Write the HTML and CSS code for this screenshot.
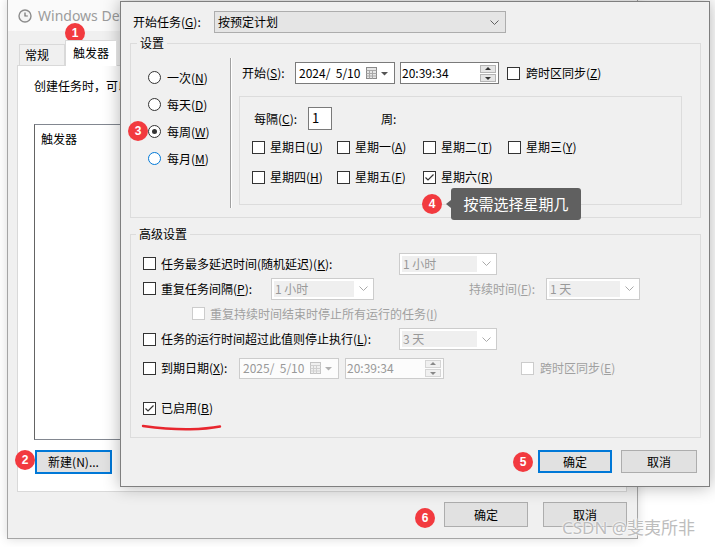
FILE: index.html
```html
<!DOCTYPE html>
<html lang="zh-CN">
<head>
    <meta charset="UTF-8">
    <title>触发器</title>
    <link rel="stylesheet" href="styles.css">
</head>
<body>
<div class="desk">

    <!-- 后面的属性窗口 -->
    <div class="win back">
        <div class="titlebar">
            <svg class="clock" width="14" height="14" viewBox="0 0 14 14">
                <circle cx="7" cy="7" r="6" fill="#f4f4f4" stroke="#8c8c8c" stroke-width="1.4"/>
                <path d="M7 3.5V7H9.8" fill="none" stroke="#707070" stroke-width="1.2"/>
            </svg>
            <span class="title">Windows Defe</span>
        </div>
        <div class="tabs">
            <span class="tab">常规</span><span class="tab active">触发器</span>
        </div>
        <div class="panel">
            <p class="hint">创建任务时，可以指定触发任务的条件。</p>
            <div class="listbox"><div class="lb-head">触发器</div></div>
            <button class="btn focus new">新建(N)...</button>
        </div>
        <div class="foot">
            <button class="btn big">确定</button>
            <button class="btn big">取消</button>
        </div>
    </div>

    <!-- 新建触发器对话框 -->
    <div class="win front">
        <div class="task-row">
            <span class="task-lbl">开始任务(<u>G</u>):</span>
            <div class="combo main">
                <span>按预定计划</span>
                <svg width="9" height="5" viewBox="0 0 9 5"><polyline points="0.5,0.5 4.5,4.5 8.5,0.5" fill="none" stroke="#606060"/></svg>
            </div>
        </div>

        <div class="group">
            <div class="group-title">设置</div>
            <div class="settings">
                <div class="freq">
                    <div class="radio-row"><span class="radio"></span><span>一次(<u>N</u>)</span></div>
                    <div class="radio-row"><span class="radio"></span><span>每天(<u>D</u>)</span></div>
                    <div class="radio-row"><span class="radio on"></span><span>每周(<u>W</u>)</span></div>
                    <div class="radio-row"><span class="radio hover"></span><span>每月(<u>M</u>)</span></div>
                </div>
                <div class="sep"></div>
                <div class="sched">
                    <div class="start-row">
                        <span class="start-lbl">开始(<u>S</u>):</span>
                        <div class="field date">
                            <span>2024/&nbsp;&nbsp;5/10</span>
                            <svg width="26" height="12" viewBox="0 0 26 12">
                                <rect x="0.5" y="0.5" width="10" height="11" fill="#e6e6e6" stroke="#8a8a8a"/>
                                <path d="M0.5 3.5H10.5M3.5 3.5V11.5M6.5 3.5V11.5M0.5 6.5H10.5M0.5 9H10.5" stroke="#a8a8a8" fill="none"/>
                                <path d="M15 5H22L18.5 8.5Z" fill="#555"/>
                            </svg>
                        </div>
                        <div class="field time">
                            <span>20:39:34</span>
                            <span class="spin"><i class="up"></i><i class="down"></i></span>
                        </div>
                        <span class="cb"></span>
                        <span class="cb-text">跨时区同步(<u>Z</u>)</span>
                    </div>
                    <div class="weekbox">
                        <div class="every">
                            <span class="every-lbl">每隔(<u>C</u>):</span>
                            <span class="num">1</span>
                            <span class="week">周:</span>
                        </div>
                        <div class="days">
                            <label class="day"><span class="cb"></span><span>星期日(<u>U</u>)</span></label>
                            <label class="day"><span class="cb"></span><span>星期一(<u>A</u>)</span></label>
                            <label class="day"><span class="cb"></span><span>星期二(<u>T</u>)</span></label>
                            <label class="day"><span class="cb"></span><span>星期三(<u>Y</u>)</span></label>
                            <label class="day"><span class="cb"></span><span>星期四(<u>H</u>)</span></label>
                            <label class="day"><span class="cb"></span><span>星期五(<u>F</u>)</span></label>
                            <label class="day"><span class="cb on"><svg width="11" height="11" viewBox="0 0 11 11"><polyline points="1.5,5.5 4,8 9.5,2.5" fill="none" stroke="#333" stroke-width="1.2"/></svg></span><span>星期六(<u>R</u>)</span></label>
                        </div>
                    </div>
                </div>
            </div>
        </div>

        <div class="group adv-group">
            <div class="group-title">高级设置</div>
            <div class="adv">
                <div class="row r1">
                    <span class="cb"></span>
                    <span class="lbl w233">任务最多延迟时间(随机延迟)(<u>K</u>):</span>
                    <div class="combo off w98"><span class="val">1 小时</span><svg width="9" height="5" viewBox="0 0 9 5"><polyline points="0.5,0.5 4.5,4.5 8.5,0.5" fill="none" stroke="#aaa"/></svg></div>
                </div>
                <div class="row r2">
                    <span class="cb"></span>
                    <span class="lbl w105">重复任务间隔(<u>P</u>):</span>
                    <div class="combo off w103"><span class="val">1 小时</span><svg width="9" height="5" viewBox="0 0 9 5"><polyline points="0.5,0.5 4.5,4.5 8.5,0.5" fill="none" stroke="#aaa"/></svg></div>
                    <span class="lbl dim dur">持续时间(<u>F</u>):</span>
                    <div class="combo off w94"><span class="val">1 天</span><svg width="9" height="5" viewBox="0 0 9 5"><polyline points="0.5,0.5 4.5,4.5 8.5,0.5" fill="none" stroke="#aaa"/></svg></div>
                </div>
                <div class="row r3">
                    <span class="cb off"></span>
                    <span class="dim">重复持续时间结束时停止所有运行的任务(<u>I</u>)</span>
                </div>
                <div class="row r4">
                    <span class="cb"></span>
                    <span class="lbl w233">任务的运行时间超过此值则停止执行(<u>L</u>):</span>
                    <div class="combo off w98"><span class="val">3 天</span><svg width="9" height="5" viewBox="0 0 9 5"><polyline points="0.5,0.5 4.5,4.5 8.5,0.5" fill="none" stroke="#aaa"/></svg></div>
                </div>
                <div class="row r5">
                    <span class="cb"></span>
                    <span class="lbl w73">到期日期(<u>X</u>):</span>
                    <div class="field date off">
                        <span>2025/&nbsp;&nbsp;5/10</span>
                        <svg width="26" height="12" viewBox="0 0 26 12">
                            <rect x="0.5" y="0.5" width="10" height="11" fill="#f0f0f0" stroke="#c4c4c4"/>
                            <path d="M0.5 3.5H10.5M3.5 3.5V11.5M6.5 3.5V11.5M0.5 6.5H10.5M0.5 9H10.5" stroke="#d0d0d0" fill="none"/>
                            <path d="M15 5H22L18.5 8.5Z" fill="#b0b0b0"/>
                        </svg>
                    </div>
                    <div class="field time off">
                        <span>20:39:34</span>
                        <span class="spin"><i class="up"></i><i class="down"></i></span>
                    </div>
                    <span class="cb off tz"></span>
                    <span class="dim tz-text">跨时区同步(<u>E</u>)</span>
                </div>
                <div class="row r6">
                    <span class="cb on"><svg width="11" height="11" viewBox="0 0 11 11"><polyline points="1.5,5.5 4,8 9.5,2.5" fill="none" stroke="#333" stroke-width="1.2"/></svg></span>
                    <span class="lbl">已启用(<u>B</u>)</span>
                </div>
            </div>
        </div>

        <div class="front-foot">
            <button class="btn focus ok">确定</button>
            <button class="btn cancel">取消</button>
        </div>
    </div>

    <!-- 标注 -->
    <span class="badge b1">1</span>
    <span class="badge b2">2</span>
    <span class="badge b3">3</span>
    <span class="badge b4">4</span>
    <span class="badge b5">5</span>
    <span class="badge b6">6</span>

    <div class="tip">按需选择星期几</div>

    <svg class="scribble" width="86" height="12" viewBox="0 0 86 12">
        <path d="M3 5C18 7 34 8.5 50 8.2S72 7 80 5.5" fill="none" stroke="#e8262e" stroke-width="2.4" stroke-linecap="round"/>
    </svg>

    <div class="mark">CSDN @斐夷所非</div>
</div>
</body>
</html>
```

FILE: styles.css
```css
* {
    margin: 0;
    padding: 0;
    box-sizing: border-box;
}

body {
    width: 715px;
    height: 547px;
    overflow: hidden;
    background: #fff;
    font: 12px/16px "Noto Sans CJK SC", "Noto Sans", sans-serif;
    color: #000;
}

u {
    text-decoration: underline;
    text-underline-offset: 1px;
}

.desk {
    position: relative;
    width: 715px;
    height: 547px;
}

/* 窗口 */
.win {
    position: absolute;
    background: #f0f0f0;
}

.back {
    left: 7px;
    top: -1px;
    width: 631px;
    height: 540px;
    border: 1px solid #a5a5a5;
    box-shadow: 0 0 10px rgba(0, 0, 0, .15);
}

.titlebar {
    display: flex;
    align-items: center;
    gap: 6px;
    height: 31px;
    padding-left: 10px;
    background: #fafafa;
    color: #9c9c9c;
    font: 14px/20px "Noto Sans", sans-serif;
}

.title {
    white-space: nowrap;
}

.tabs {
    display: flex;
    align-items: flex-end;
    height: 25px;
    margin: 9px 0 0 11px;
}

.tab {
    height: 21px;
    width: 46px;
    padding: 2px 0 0 5px;
    border: 1px solid #d9d9d9;
    border-bottom: none;
    background: #f0f0f0;
}

.tab.active {
    position: relative;
    z-index: 1;
    width: 52px;
    height: 26px;
    margin-bottom: -1px;
    padding: 4px 0 0 7px;
    background: #fff;
}

.panel {
    width: 610px;
    height: 427px;
    margin-left: 9px;
    padding: 12px 0 0 16px;
    background: #fff;
    border: 1px solid #d9d9d9;
}

.hint {
    white-space: nowrap;
}

.listbox {
    width: 580px;
    height: 316px;
    margin-top: 30px;
    border: 1px solid #828790;
    border-left-color: #646464;
}

.lb-head {
    padding: 6px;
}

.btn {
    display: flex;
    align-items: center;
    justify-content: center;
    background: #e1e1e1;
    border: 1px solid #adadad;
    font: inherit;
    color: #000;
}

.btn.focus {
    border: 2px solid #0078d7;
}

.new {
    width: 77px;
    height: 24px;
    margin: 10px 0 0 1px;
}

.foot {
    display: flex;
    justify-content: flex-end;
    gap: 15px;
    padding-right: 10px;
    margin-top: 10px;
}

.big {
    width: 84px;
    height: 25px;
}

/* 前面的对话框 */
.front {
    left: 120px;
    top: 1px;
    width: 590px;
    height: 486px;
    border: 1px solid #7f7f7f;
    box-shadow: 0 0 16px rgba(0, 0, 0, .3);
}

.task-row {
    display: flex;
    align-items: center;
    height: 22px;
    margin: 9px 0 0 12px;
}

.task-lbl {
    width: 81px;
}

.combo {
    display: flex;
    align-items: center;
    justify-content: space-between;
    height: 22px;
}

.combo.main {
    width: 292px;
    padding: 0 6px 0 3px;
    background: #e5e5e5;
    border: 1px solid #adadad;
}

.combo.off {
    padding: 2px 0 2px 2px;
    background: #fff;
    border: 1px solid #ccc;
    color: #999;
}

.combo.off .val {
    flex: 1;
    height: 100%;
    padding-left: 1px;
    line-height: 16px;
    background: #efefef;
}

.combo.off svg {
    margin: 0 5px;
}

.w98 { width: 98px; }
.w103 { width: 103px; }
.w94 { width: 94px; }

/* 分组框 */
.group {
    width: 571px;
    margin: 10px 0 0 9px;
    border: 1px solid #dcdcdc;
}

.group-title {
    width: fit-content;
    margin: -9px 0 0 6px;
    padding: 0 3px;
    line-height: 16px;
    background: #f0f0f0;
}

.adv-group {
    margin-top: 16px;
}

.adv-group .group-title {
    margin-left: 5px;
}

.settings {
    display: flex;
    height: 166px;
}

.freq {
    width: 99px;
    padding: 13px 0 0 17px;
}

.radio-row {
    display: flex;
    align-items: center;
    gap: 6px;
    height: 27px;
}

.radio {
    position: relative;
    width: 13px;
    height: 13px;
    border: 1px solid #333;
    border-radius: 50%;
    background: #fff;
}

.radio.on::after {
    content: "";
    position: absolute;
    left: 3px;
    top: 3px;
    width: 5px;
    height: 5px;
    border-radius: 50%;
    background: #333;
}

.radio.hover {
    border-color: #0078d7;
}

.sep {
    width: 2px;
    height: 150px;
    margin-top: 7px;
    border-left: 1px solid #a0a0a0;
    border-right: 1px solid #fff;
}

.sched {
    padding: 11px 0 0 10px;
}

.start-row {
    display: flex;
    align-items: center;
    height: 22px;
}

.start-lbl {
    width: 53px;
}

.field {
    display: flex;
    align-items: center;
    justify-content: space-between;
    height: 22px;
    padding: 0 2px 0 3px;
    background: #fff;
    border: 1px solid #7a7a7a;
}

.field.date {
    width: 100px;
}

.field.time {
    width: 99px;
    margin-left: 5px;
    padding-left: 1px;
}

.field.off {
    height: 21px;
    border-color: #ccc;
    color: #999;
    background: #fcfcfc;
}

.spin {
    display: flex;
    flex-direction: column;
    gap: 1px;
}

.spin i {
    position: relative;
    width: 16px;
    height: 8px;
    background: #e5e5e5;
    border: 1px solid #b4b4b4;
}

.spin i::after {
    content: "";
    position: absolute;
    left: 4px;
    border-left: 3px solid transparent;
    border-right: 3px solid transparent;
}

.spin .up::after {
    top: 1px;
    border-bottom: 3px solid #333;
}

.spin .down::after {
    top: 2px;
    border-top: 3px solid #333;
}

.field.off .spin i {
    background: #f0f0f0;
    border-color: #d5d5d5;
}

.field.off .spin .up::after { border-bottom-color: #888; }
.field.off .spin .down::after { border-top-color: #888; }

.cb {
    display: inline-flex;
    align-items: center;
    justify-content: center;
    flex: 0 0 auto;
    width: 13px;
    height: 13px;
    background: #fff;
    border: 1px solid #333;
}

.cb.off {
    border-color: #ccc;
}

.start-row .cb {
    margin-left: 8px;
}

.cb-text {
    margin-left: 6px;
}

.weekbox {
    width: 443px;
    height: 109px;
    margin: 12px 0 0 -3px;
    padding: 10px 0 0 12px;
    border: 1px solid #dcdcdc;
}

.every {
    display: flex;
    align-items: center;
    height: 23px;
    margin-left: 2px;
}

.every-lbl {
    width: 54px;
}

.num {
    width: 24px;
    height: 23px;
    padding: 2px 0 0 3px;
    font-size: 13px;
    background: #fff;
    border: 1px solid #7a7a7a;
}

.week {
    margin-left: 49px;
}

.days {
    display: grid;
    grid-template-columns: 85px 86px 85px 85px;
    grid-auto-rows: 20px;
    row-gap: 10px;
    margin-top: 7px;
}

.day {
    display: flex;
    align-items: center;
    gap: 5px;
}

/* 高级设置 */
.adv {
    height: 195px;
    padding: 9px 0 0 12px;
}

.row {
    display: flex;
    align-items: center;
    gap: 5px;
    height: 25px;
}

.row .lbl {
    flex: 0 0 auto;
}

.w233 { width: 233px; }
.w105 { width: 105px; }
.w73 { width: 73px; }

.r3 {
    padding-left: 49px;
}

.r4 {
    height: 26px;
}

.r5 {
    height: 32px;
}

.r5 .field.time {
    margin-left: 1px;
}

.r6 {
    height: 24px;
    margin-top: 12px;
}

.dim {
    color: #a0a0a0;
}

.dur {
    width: 77px;
    margin-left: 90px;
}

.row .dur + .combo {
    margin-left: -5px;
}

.tz {
    margin-left: 72px;
}

.tz-text {
    margin-left: 1px;
}

.front-foot {
    display: flex;
    justify-content: flex-end;
    gap: 9px;
    padding-right: 12px;
    margin-top: 12px;
}

.ok {
    width: 74px;
    height: 23px;
}

.cancel {
    width: 76px;
    height: 23px;
}

/* 标注 */
.badge {
    position: absolute;
    width: 20px;
    height: 20px;
    border-radius: 50%;
    background: #f23a3f;
    color: #fff;
    font: bold 12px/20px "Liberation Sans", sans-serif;
    text-align: center;
}

.b1 { left: 65px; top: 23px; }
.b2 { left: 15px; top: 450px; }
.b3 { left: 128px; top: 121px; }
.b4 { left: 422px; top: 194px; }
.b5 { left: 513px; top: 452px; }
.b6 { left: 415px; top: 508px; }

.tip {
    position: absolute;
    left: 451px;
    top: 188px;
    width: 130px;
    height: 32px;
    border-radius: 3px;
    background: #606060;
    color: #fff;
    font-size: 15px;
    line-height: 32px;
    text-align: center;
}

.tip::before {
    content: "";
    position: absolute;
    left: -5px;
    top: 12px;
    border-top: 4px solid transparent;
    border-bottom: 4px solid transparent;
    border-right: 5px solid #606060;
}

.scribble {
    position: absolute;
    left: 140px;
    top: 421px;
}

.mark {
    position: absolute;
    left: 562px;
    top: 516px;
    font: 17px/24px "Noto Sans", "Noto Sans CJK SC", sans-serif;
    color: #bdbdbd;
    text-shadow: 0 0 2px #fff, 0 0 2px #fff;
    white-space: nowrap;
}
```
